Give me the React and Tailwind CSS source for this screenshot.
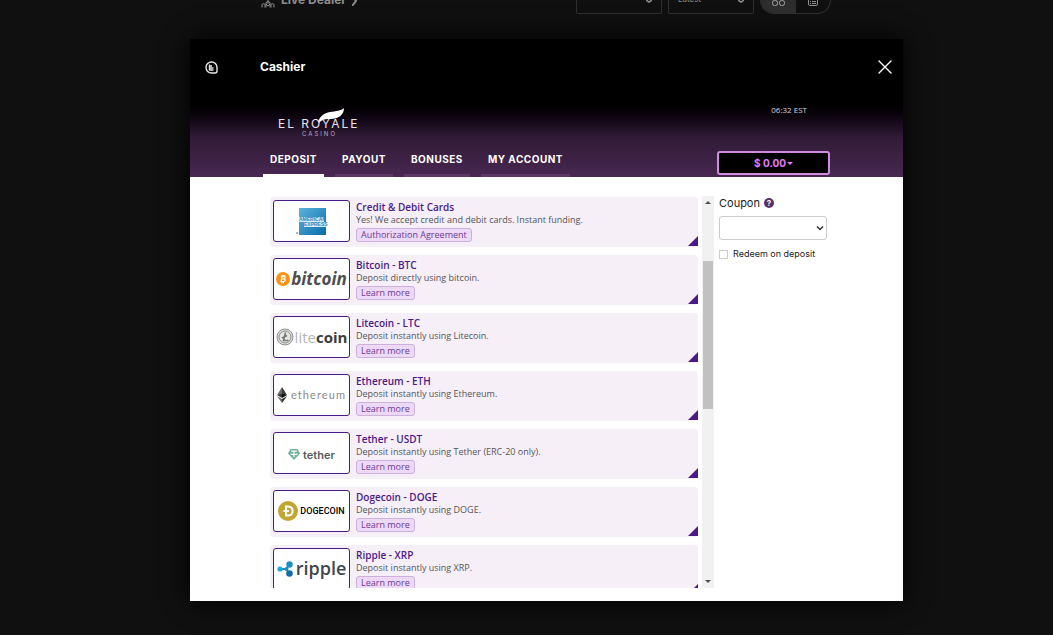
import { useState } from "react";
import { X } from "lucide-react";

const TABS = ["DEPOSIT", "PAYOUT", "BONUSES", "MY ACCOUNT"];

function AmexLogo() {
  return (
    <svg viewBox="0 0 32 30" className="w-8 h-[30px]">
      <defs>
        <linearGradient id="amex" x1="0" y1="0" x2="1" y2="1">
          <stop offset="0" stopColor="#5cb4dc" />
          <stop offset="1" stopColor="#0a6bab" />
        </linearGradient>
      </defs>
      <rect x="3" y="2" width="27" height="27" fill="url(#amex)" />
      <rect x="3" y="11" width="25" height="5" fill="#d5eaf5" />
      <rect x="8" y="16" width="22" height="5" fill="#d5eaf5" />
      <text x="3" y="15" fontSize="5" fontWeight="700" fill="#2a86bd" fontFamily="Liberation Sans, sans-serif">AMERICAN</text>
      <text x="8" y="20" fontSize="5" fontWeight="700" fill="#2a86bd" fontFamily="Liberation Sans, sans-serif">EXPRESS</text>
      <circle cx="1" cy="27" r="1" fill="#7fa9cf" />
    </svg>
  );
}

function BitcoinLogo() {
  return (
    <div className="flex items-center gap-px font-['Open_Sans',sans-serif]">
      <svg viewBox="0 0 16 16" className="w-[14px] h-[14px]">
        <circle cx="8" cy="8" r="8" fill="#f7931a" />
        <path d="M6.8 4.4 5.8 11.4M8 3v1.6M10 3.4l-.2 1.6M6.6 11.2l-.2 1.6M8.6 11.3l-.2 1.6M5.6 4.6l3.6.4c1.8.2 1.6 2.8-.2 2.8H6.6h2.6c2 .2 1.6 3.2-.5 3.200l-3.800-.2" fill="none" stroke="#fff" strokeWidth="1.3" />
      </svg>
      <span className="text-[17px] leading-5 font-bold italic text-[#4d4d4d]">bitcoin</span>
    </div>
  );
}

function LitecoinLogo() {
  return (
    <div className="flex items-center font-['Open_Sans',sans-serif] text-[15px] leading-5">
      <svg viewBox="0 0 18 18" className="w-[18px] h-[18px]">
        <circle cx="9" cy="9" r="8" fill="#e4e4e4" stroke="#8b8b8b" strokeWidth="1" />
        <circle cx="9" cy="9" r="6" fill="none" stroke="#8b8b8b" strokeWidth="1" />
        <path d="m9.500 4.500-2 8h5M6 10l5-2.500" fill="none" stroke="#777" strokeWidth="1.5" />
      </svg>
      <span className="pl-px text-[#b5b5b5]">lite</span>
      <span className="font-bold text-[#3c3c3c]">coin</span>
    </div>
  );
}

function EthereumLogo() {
  return (
    <div className="flex items-center gap-1 font-['Lato',sans-serif]">
      <svg viewBox="0 0 10 16" className="w-[10px] h-4">
        <path d="M5 0 0 8l5-2z" fill="#6b6b6b" />
        <path d="M5 0v6l5 2z" fill="#3a3a3a" />
        <path d="m0 8 5-2v5z" fill="#3a3a3a" />
        <path d="m10 8-5-2v5z" fill="#111" />
        <path d="m0 9 5 7v-4z" fill="#6b6b6b" />
        <path d="m10 9-5 7v-4z" fill="#2c2c2c" />
      </svg>
      <span className="text-[11px] leading-4 tracking-widest text-[#8a8a8a]">ethereum</span>
    </div>
  );
}

function TetherLogo() {
  return (
    <div className="flex items-center gap-[3px] pt-[3px] font-['Inter',sans-serif]">
      <svg viewBox="0 0 12 11" className="w-3 h-[11px]">
        <path d="M2.5 0h7L12 4.5 6 11 0 4.500z" fill="#6fae9c" />
        <path d="M3 2.200h6M6 2.200v6M2.500 4.800c1.500 1 5.500 1 7 0" fill="none" stroke="#fff" strokeWidth="1.2" />
      </svg>
      <span className="text-[11px] leading-4 font-semibold text-[#555a5a]">tether</span>
    </div>
  );
}

function DogecoinLogo() {
  return (
    <div className="flex items-center gap-[2px]">
      <svg viewBox="0 0 20 20" className="w-5 h-5">
        <circle cx="10" cy="10" r="10" fill="#c2a633" />
        <path d="M8 5.500h2.500c5.500 0 5.500 9 0 9H8zM5.500 10H11" fill="none" stroke="#fff" strokeWidth="2" />
      </svg>
      <span className="font-['Roboto',sans-serif] text-[9px] leading-4 font-medium text-black">DOGECOIN</span>
    </div>
  );
}

function RippleLogo() {
  return (
    <div className="flex items-center gap-[2px]">
      <svg viewBox="0 0 17 16" className="w-[17px] h-4">
        <path d="M3 8h6l3.500-4.500M9 8l3.500 4.500" fill="none" stroke="#1a8fc4" strokeWidth="2" />
        <circle cx="3" cy="8" r="2.6" fill="#1fa5dc" />
        <circle cx="12.5" cy="3.5" r="3.2" fill="#1a8fc4" />
        <circle cx="9.5" cy="8" r="2" fill="#1a8fc4" />
        <circle cx="12.5" cy="12.5" r="3.3" fill="#0f6ea6" />
      </svg>
      <span className="pb-[2px] font-['Open_Sans',sans-serif] text-[18px] leading-5 font-semibold text-[#40464b]">ripple</span>
    </div>
  );
}

const METHODS = [
  { id: "card", name: "Credit & Debit Cards", text: "Yes! We accept credit and debit cards. Instant funding.", action: "Authorization Agreement", Logo: AmexLogo },
  { id: "btc",  name: "Bitcoin - BTC",   text: "Deposit directly using bitcoin.", action: "Learn more", Logo: BitcoinLogo },
  { id: "ltc",  name: "Litecoin - LTC",  text: "Deposit instantly using Litecoin.", action: "Learn more", Logo: LitecoinLogo },
  { id: "eth",  name: "Ethereum - ETH",  text: "Deposit instantly using Ethereum.", action: "Learn more", Logo: EthereumLogo },
  { id: "usdt", name: "Tether - USDT",   text: "Deposit instantly using Tether (ERC-20 only).", action: "Learn more", Logo: TetherLogo },
  { id: "doge", name: "Dogecoin - DOGE", text: "Deposit instantly using DOGE.", action: "Learn more", Logo: DogecoinLogo },
  { id: "xrp",  name: "Ripple - XRP",    text: "Deposit instantly using XRP.", action: "Learn more", Logo: RippleLogo },
];

function MethodRow({ name, text, action, Logo }) {
  return (
    <li className="flex shrink-0 h-[50px] pl-[3px] pt-[3px] rounded bg-[#f6eff8]">
      <div className="flex items-center justify-center shrink-0 w-[77px] h-[42px] rounded-[3px] border border-[#4b1a86] bg-white overflow-hidden">
        <Logo />
      </div>
      <div className="flex-1 pl-[6px] font-['Open_Sans',sans-serif]">
        <h3 className="text-[10px] leading-[14px] font-semibold text-[#4b1a86]">{name}</h3>
        <p className="text-[9px] leading-3 text-[#555]">{text}</p>
        <button className="block mt-[2px] h-[14px] px-1 rounded-[3px] border border-[#cdb0dc] bg-[#ecd9f5] text-[9px] leading-3 text-[#6c3a96]">
          {action}
        </button>
      </div>
      <svg viewBox="0 0 10 10" className="w-[10px] h-[10px] self-end mb-px">
        <path d="M10 0v10H0z" fill="#4b1a86" />
      </svg>
    </li>
  );
}

function Brand() {
  return (
    <svg viewBox="0 0 84 30" className="w-[84px] h-[30px]" fontFamily="Inter, sans-serif">
      <path d="M40 14C42 8 46 5 52 4c6-1 11-1 14-4 0 7-6 11-13 11-5 0-9 0-12 4z" fill="#fff" />
      <text x="0" y="20" fontSize="12" letterSpacing="2" fill="#e9e2ec">EL ROYALE</text>
      <text x="24" y="28" fontSize="6" letterSpacing="2" fill="#b9a9c0">CASINO</text>
    </svg>
  );
}

function LobbyBar() {
  return (
    <div className="flex items-start h-[14px] pl-[261px] pr-[222px] font-['Inter',sans-serif] text-[#8d8d8d]">
      <div className="flex flex-1 items-start">
        <svg viewBox="0 0 14 8" className="w-[14px] h-2" fill="none" stroke="currentColor">
          <path d="M1 7.500V4.500q2-2 3 0v3M5 7.500V2.500q2-2 4 0v5M10 7.500v-3q1-2 3 0v3M5 4l2 2 2-2M7 0v4" />
        </svg>
        <a href="#live" className="-mt-[7px] pl-[6px] text-[12px] leading-[14px] font-bold">Live Dealer</a>
        <svg viewBox="0 0 6 10" className="-mt-1 ml-[6px] w-[6px] h-[10px]" fill="none" stroke="currentColor" strokeWidth="2">
          <path d="m0 0 4 5-4 5" />
        </svg>
      </div>
      <div className="flex items-start gap-[6px]">
        {["", "Latest"].map(label => (
          <button key={label} aria-label={label || "Filter"} className="flex items-start justify-between w-[86px] h-[14px] px-[9px] rounded-b-[2px] border border-t-0 border-[#2f2f2f] text-[8px] leading-[8px]">
            <span className="-mt-[5px]">{label}</span>
            <svg viewBox="0 0 6 3" className="w-[6px] h-[3px]" fill="none" stroke="currentColor" strokeWidth="1.5">
              <path d="m0 0 3 2 3-2" />
            </svg>
          </button>
        ))}
        <div className="flex w-[71px] h-[14px] rounded-b-full border border-t-0 border-[#2f2f2f] overflow-hidden">
          <button aria-label="Grid view" className="flex flex-1 items-start justify-center bg-[#2d2d2d]">
            <svg viewBox="0 0 13 6" className="w-[13px] h-[6px]" fill="none" stroke="#a5a5a5">
              <rect x=".5" y=".5" width="5" height="5" rx="2" />
              <rect x="7.5" y=".5" width="5" height="5" rx="2" />
            </svg>
          </button>
          <button aria-label="List view" className="flex flex-1 items-start justify-center">
            <svg viewBox="0 0 10 6" className="w-[10px] h-[6px]" fill="none" stroke="#8d8d8d">
              <path d="M.5 0v4q0 1.500 1.500 1.500h6q1.500 0 1.500-1.500V0M2 1.500h1M4 1.500h4M2 3.500h1M4 3.500h4" />
            </svg>
          </button>
        </div>
      </div>
    </div>
  );
}

export default function App() {
  const [tab, setTab]       = useState("DEPOSIT");
  const [redeem, setRedeem] = useState(false);

  return (
    <div className="min-h-screen bg-[#101010]">
      <LobbyBar />

      <div role="dialog" aria-label="Cashier" className="mt-[25px] ml-[190px] mr-[150px] bg-white shadow-[0_0_24px_#000] font-['Inter',sans-serif]">
        <div className="flex items-center h-14 pl-[15px] pr-[11px] bg-black text-white">
          <button aria-label="History">
            <svg viewBox="0 0 13 13" className="w-[13px] h-[13px]" fill="none" stroke="#e6e6e6" strokeWidth="1.4">
              <path d="M6.500 1a5.500 5.500 0 1 0 0 11H10q2 0 2-2V6.500A5.500 5.500 0 0 0 6.500 1z" />
              <path d="M4.500 3.500v6M4.500 5h2.500M4.500 7h4M4.500 9h4" />
            </svg>
          </button>
          <h2 className="flex-1 pl-[42px] text-[12px] leading-4 font-bold">Cashier</h2>
          <button aria-label="Close"><X className="w-[14px] h-[14px]" strokeWidth={1.4} viewBox="5 5 14 14" /></button>
        </div>

        <div className="flex justify-between h-[82px] px-[73px] bg-linear-to-b from-black via-[#2f1a35] to-[#492852]">
          <div className="flex flex-col justify-between">
            <div className="pl-[15px] pt-[13px]"><Brand /></div>
            <nav className="flex gap-[11px]">
              {TABS.map(t => (
                <button
                  key={t}
                  onClick={() => setTab(t)}
                  className={`px-[7px] pb-[7px] border-b-[3px] text-[10px] leading-4 font-bold tracking-wider text-white ${tab === t ? "border-white" : "border-[#5c3868]"}`}
                >
                  {t}
                </button>
              ))}
            </nav>
          </div>
          <div className="flex flex-col items-end justify-between pt-[9px] pb-[2px]">
            <span className="pr-[23px] font-['Open_Sans',sans-serif] text-[8px] leading-3 text-[#d8d0dc]">06:32 EST</span>
            <button className="flex items-center justify-center gap-px w-[113px] h-6 rounded-[3px] border-2 border-[#cf8be0] bg-black text-[10px] font-bold text-[#e07cf5]">
              $ 0.00
              <svg viewBox="0 0 6 3" className="w-[6px] h-[3px]"><path d="M0 0h6L3 3z" fill="currentColor" /></svg>
            </button>
          </div>
        </div>

        <div className="flex items-start pl-[80px] pr-[73px] pt-[19px] pb-[13px]">
          <ul className="flex flex-1 flex-col gap-2 h-[392px] pt-px overflow-hidden">
            {METHODS.map(m => <MethodRow key={m.id} {...m} />)}
          </ul>
          {/* scrollbar */}
          <div className="flex flex-col items-center justify-between h-[392px] w-3 ml-1 py-[5px] bg-[#f1f1f1]">
            <svg viewBox="0 0 6 3" className="w-[6px] h-[3px]"><path d="M0 3h6L3 0z" fill="#505050" /></svg>
            <div className="w-[10px] h-[148px] mb-[114px] bg-[#c1c1c1]" />
            <svg viewBox="0 0 6 3" className="w-[6px] h-[3px]"><path d="M0 0h6L3 3z" fill="#505050" /></svg>
          </div>

          <div className="w-[111px] ml-[5px] text-[#222]">
            <div className="flex items-center gap-1">
              <label htmlFor="coupon" className="text-[11px] leading-[14px]">Coupon</label>
              <button aria-label="Coupon help" className="w-[10px] h-[10px] rounded-full bg-[#5a3068] text-[8px] leading-[10px] font-bold text-white">?</button>
            </div>
            <div className="grid items-center w-[108px] mt-[6px]">
              <select id="coupon" className="col-start-1 row-start-1 h-6 w-full appearance-none rounded-[3px] border border-[#ccc] bg-white" />
              <svg viewBox="0 0 8 5" className="col-start-1 row-start-1 justify-self-end mr-[3px] w-2 h-[5px] pointer-events-none" fill="none" stroke="#333" strokeWidth="1.5">
                <path d="m1 .5 3 3 3-3" />
              </svg>
            </div>
            <label className="flex items-center gap-[5px] mt-2 text-[9px] leading-3 whitespace-nowrap">
              <input type="checkbox" checked={redeem} onChange={e => setRedeem(e.target.checked)} className="appearance-none w-[9px] h-[9px] border border-[#ccc] checked:bg-[#4b1a86]" />
              Redeem on deposit
            </label>
          </div>
        </div>
      </div>
    </div>
  );
}
